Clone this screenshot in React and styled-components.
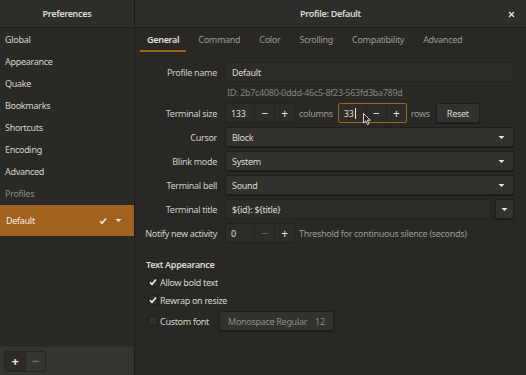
import React from "react";
import styled, { createGlobalStyle } from "styled-components";

const Global = createGlobalStyle`
  html, body { margin: 0; padding: 0; background: #292824; }
  body {
    font-family: "Noto Sans", "Open Sans", sans-serif;
    font-size: 9px;
    letter-spacing: -0.3px;
    color: #d6d4ce;
  }
  * { box-sizing: border-box; }
`;

const Window = styled.div`
  width: 526px;
  height: 375px;
  display: flex;
  flex-direction: column;
  background: #292824;
  overflow: hidden;
`;

const HeaderBar = styled.div`
  height: 28px;
  flex-shrink: 0;
  display: flex;
  background: #2e2d29;
  border-bottom: 1px solid #1e1d1b;
`;

const HeaderSide = styled.div`
  width: 135px;
  flex-shrink: 0;
  border-right: 1px solid #1e1d1b;
  display: flex;
  align-items: center;
  justify-content: center;
  font-weight: 600;
  color: #dcdad4;
`;

const HeaderMain = styled.div`
  flex: 1;
  position: relative;
  display: flex;
  align-items: center;
  justify-content: center;
  font-weight: 600;
  color: #dcdad4;
`;

const CloseBtn = styled.div`
  position: absolute;
  right: 8px;
  top: 7px;
  width: 14px;
  height: 14px;
  display: flex;
  align-items: center;
  justify-content: center;
`;

const Body = styled.div`
  flex: 1;
  display: flex;
  min-height: 0;
`;

const Sidebar = styled.div`
  width: 135px;
  flex-shrink: 0;
  border-right: 1px solid #1e1d1b;
  display: flex;
  flex-direction: column;
  background: #2a2925;
`;

const SideList = styled.div`
  flex: 1;
  display: flex;
  flex-direction: column;
`;

const SideItem = styled.div`
  height: 22px;
  display: flex;
  align-items: center;
  padding-left: 5px;
  color: ${(p) => (p.$dim ? "#8b8983" : "#d6d4ce")};
`;

const SideSelected = styled.div`
  height: 31px;
  margin-top: 1px;
  display: flex;
  align-items: center;
  padding-left: 6px;
  padding-right: 12px;
  background: #a3611f;
  color: #f4efe6;
  gap: 8px;
`;

const Grow = styled.span`
  flex: 1;
`;

const SideToolbar = styled.div`
  height: 29px;
  background: #353430;
  border-top: 1px solid #2f2e2a;
  display: flex;
  align-items: center;
  padding-left: 4px;
`;

const ToolGroup = styled.div`
  display: flex;
  border: 1px solid #262522;
  border-radius: 2px;
  overflow: hidden;
`;

const ToolBtn = styled.div`
  width: 20px;
  height: 19px;
  display: flex;
  align-items: center;
  justify-content: center;
  background: ${(p) => (p.$dim ? "#353430" : "#2c2b28")};
  color: ${(p) => (p.$dim ? "#6e6c67" : "#e8e6e0")};
  font-size: 13px;
  font-weight: 700;
  & + & { border-left: 1px solid #262522; }
`;

const Main = styled.div`
  flex: 1;
  min-width: 0;
  display: flex;
  flex-direction: column;
`;

const Tabs = styled.div`
  height: 24px;
  display: flex;
  padding-left: 5px;
`;

const Tab = styled.div`
  padding: 0 7px;
  display: flex;
  align-items: center;
  font-weight: ${(p) => (p.$active ? 600 : 400)};
  color: ${(p) => (p.$active ? "#e2e0da" : "#9c9a94")};
  border-bottom: 2px solid ${(p) => (p.$active ? "#a3611f" : "transparent")};
  margin-right: 5px;
`;

const Form = styled.div`
  display: grid;
  grid-template-columns: 82px 1fr;
  column-gap: 8px;
  row-gap: 4px;
  padding: 10px 12px 0 0;
  align-items: center;
`;

const Label = styled.div`
  text-align: right;
  color: #cfcdc7;
  white-space: nowrap;
`;

const Entry = styled.div`
  height: 20px;
  display: flex;
  align-items: center;
  padding-left: 6px;
  background: #2d2c29;
  border: 1px solid #232220;
  border-radius: 2px;
  color: #dedcd6;
  flex: ${(p) => (p.$grow ? 1 : "none")};
`;

const IdText = styled.div`
  grid-column: 2;
  height: 13px;
  display: flex;
  align-items: center;
  padding-left: 2px;
  color: #86847e;
`;

const Row = styled.div`
  display: flex;
  align-items: center;
  gap: 4px;
`;

const Spin = styled.div`
  width: ${(p) => p.$w || 70}px;
  height: 20px;
  display: flex;
  background: #2d2c29;
  border: 1px solid ${(p) => (p.$focus ? "#a3611f" : "#232220")};
  border-radius: 2px;
  position: relative;
`;

const SpinValue = styled.div`
  flex: 1;
  display: flex;
  align-items: center;
  padding-left: 5px;
  color: #dedcd6;
`;

const SpinBtn = styled.div`
  width: 20px;
  display: flex;
  align-items: center;
  justify-content: center;
  border-left: 1px solid #262522;
  color: ${(p) => (p.$dim ? "#64625d" : "#e4e2dc")};
  font-size: 12px;
`;

const Caret = styled.span`
  display: inline-block;
  width: 1px;
  height: 11px;
  background: #e4e2dc;
  margin-left: 1px;
`;

const Unit = styled.span`
  color: #9a9892;
  margin-right: ${(p) => p.$mr || 0}px;
`;

const Button = styled.div`
  height: 20px;
  padding: 0 ${(p) => p.$px || 10}px;
  display: flex;
  align-items: center;
  justify-content: center;
  background: #33322e;
  border: 1px solid #1f1e1c;
  border-radius: 2px;
  color: ${(p) => (p.$dim ? "#8e8c86" : "#dcdad4")};
  box-shadow: 0 1px 1px rgba(0,0,0,0.35);
  gap: ${(p) => p.$gap || 0}px;
`;

const Combo = styled.div`
  height: 20px;
  display: flex;
  align-items: center;
  padding: 0 8px 0 6px;
  background: #33322e;
  border: 1px solid #1f1e1c;
  border-radius: 2px;
  color: #dcdad4;
  box-shadow: 0 1px 1px rgba(0,0,0,0.35);
`;

const Section = styled.div`
  padding: 15px 0 0 11px;
  display: flex;
  flex-direction: column;
`;

const SectionTitle = styled.div`
  font-weight: 600;
  color: #dcdad4;
  height: 12px;
  display: flex;
  align-items: center;
  margin-bottom: 3px;
`;

const CheckRow = styled.div`
  height: ${(p) => p.$h || 18}px;
  margin-top: ${(p) => p.$mt || 0}px;
  display: flex;
  align-items: center;
  padding-left: 2px;
  gap: 2px;
  color: #d6d4ce;
`;

const Box = styled.div`
  width: 10px;
  height: 10px;
  border: 1px solid #1f1e1c;
  background: #302f2b;
  border-radius: 2px;
  display: flex;
  align-items: center;
  justify-content: center;
`;

const FontLabel = styled.span`
  margin-right: 8px;
`;

const Pointer = styled.svg`
  position: absolute;
  left: 24px;
  top: 9px;
`;

const Arrow = () => (
  <svg width="7" height="5" viewBox="0 0 7 5">
    <path d="M0.5 1 L6.5 1 L3.5 4 Z" fill="#e8e6e0" />
  </svg>
);

const Tick = ({ size = 8 }) => (
  <svg width={size} height={size} viewBox="0 0 8 8">
    <path d="M1 4.2 L3 6.3 L7 1.5" stroke="#eeece6" strokeWidth="1.6" fill="none" />
  </svg>
);

export default function App() {
  return (
    <Window>
      <Global />
      <HeaderBar>
        <HeaderSide>Preferences</HeaderSide>
        <HeaderMain>
          Profile: Default
          <CloseBtn>
            <svg width="7" height="7" viewBox="0 0 7 7">
              <path d="M1 1 L6 6 M6 1 L1 6" stroke="#e4e2dc" strokeWidth="1.4" />
            </svg>
          </CloseBtn>
        </HeaderMain>
      </HeaderBar>
      <Body>
        <Sidebar>
          <SideList>
            <SideItem>Global</SideItem>
            <SideItem>Appearance</SideItem>
            <SideItem>Quake</SideItem>
            <SideItem>Bookmarks</SideItem>
            <SideItem>Shortcuts</SideItem>
            <SideItem>Encoding</SideItem>
            <SideItem>Advanced</SideItem>
            <SideItem $dim>Profiles</SideItem>
            <SideSelected>
              <Grow>Default</Grow>
              <Tick />
              <Arrow />
            </SideSelected>
          </SideList>
          <SideToolbar>
            <ToolGroup>
              <ToolBtn>+</ToolBtn>
              <ToolBtn $dim>−</ToolBtn>
            </ToolGroup>
          </SideToolbar>
        </Sidebar>
        <Main>
          <Tabs>
            <Tab $active>General</Tab>
            <Tab>Command</Tab>
            <Tab>Color</Tab>
            <Tab>Scrolling</Tab>
            <Tab>Compatibility</Tab>
            <Tab>Advanced</Tab>
          </Tabs>
          <Form>
            <Label>Profile name</Label>
            <Entry>Default</Entry>
            <IdText>ID: 2b7c4080-0ddd-46c5-8f23-563fd3ba789d</IdText>
            <Label>Terminal size</Label>
            <Row>
              <Spin>
                <SpinValue>133</SpinValue>
                <SpinBtn>−</SpinBtn>
                <SpinBtn>+</SpinBtn>
              </Spin>
              <Unit $mr={1}>columns</Unit>
              <Spin $focus $w={69}>
                <SpinValue>33<Caret /></SpinValue>
                <SpinBtn>−</SpinBtn>
                <SpinBtn>+</SpinBtn>
                <Pointer width="8" height="12" viewBox="0 0 8 12">
                  <path d="M0.5 0.5 L0.5 10 L2.8 7.8 L4.5 11.5 L6 10.8 L4.3 7.2 L7.3 7.2 Z" fill="#222" stroke="#e8e8e8" strokeWidth="0.9" />
                </Pointer>
              </Spin>
              <Unit $mr={2}>rows</Unit>
              <Button $px={10}>Reset</Button>
            </Row>
            <Label>Cursor</Label>
            <Combo><Grow>Block</Grow><Arrow /></Combo>
            <Label>Blink mode</Label>
            <Combo><Grow>System</Grow><Arrow /></Combo>
            <Label>Terminal bell</Label>
            <Combo><Grow>Sound</Grow><Arrow /></Combo>
            <Label>Terminal title</Label>
            <Row>
              <Entry $grow>{"${id}: ${title}"}</Entry>
              <Button $px={5}><Arrow /></Button>
            </Row>
            <Label>Notify new activity</Label>
            <Row>
              <Spin>
                <SpinValue>0</SpinValue>
                <SpinBtn $dim>−</SpinBtn>
                <SpinBtn>+</SpinBtn>
              </Spin>
              <Unit>Threshold for continuous silence (seconds)</Unit>
            </Row>
          </Form>
          <Section>
            <SectionTitle>Text Appearance</SectionTitle>
            <CheckRow><Box><Tick /></Box>Allow bold text</CheckRow>
            <CheckRow><Box><Tick /></Box>Rewrap on resize</CheckRow>
            <CheckRow $h={20} $mt={2}>
              <Box />
              <FontLabel>Custom font</FontLabel>
              <Button $dim $px={8} $gap={8}>
                <span>Monospace Regular</span>
                <span>12</span>
              </Button>
            </CheckRow>
          </Section>
        </Main>
      </Body>
    </Window>
  );
}
